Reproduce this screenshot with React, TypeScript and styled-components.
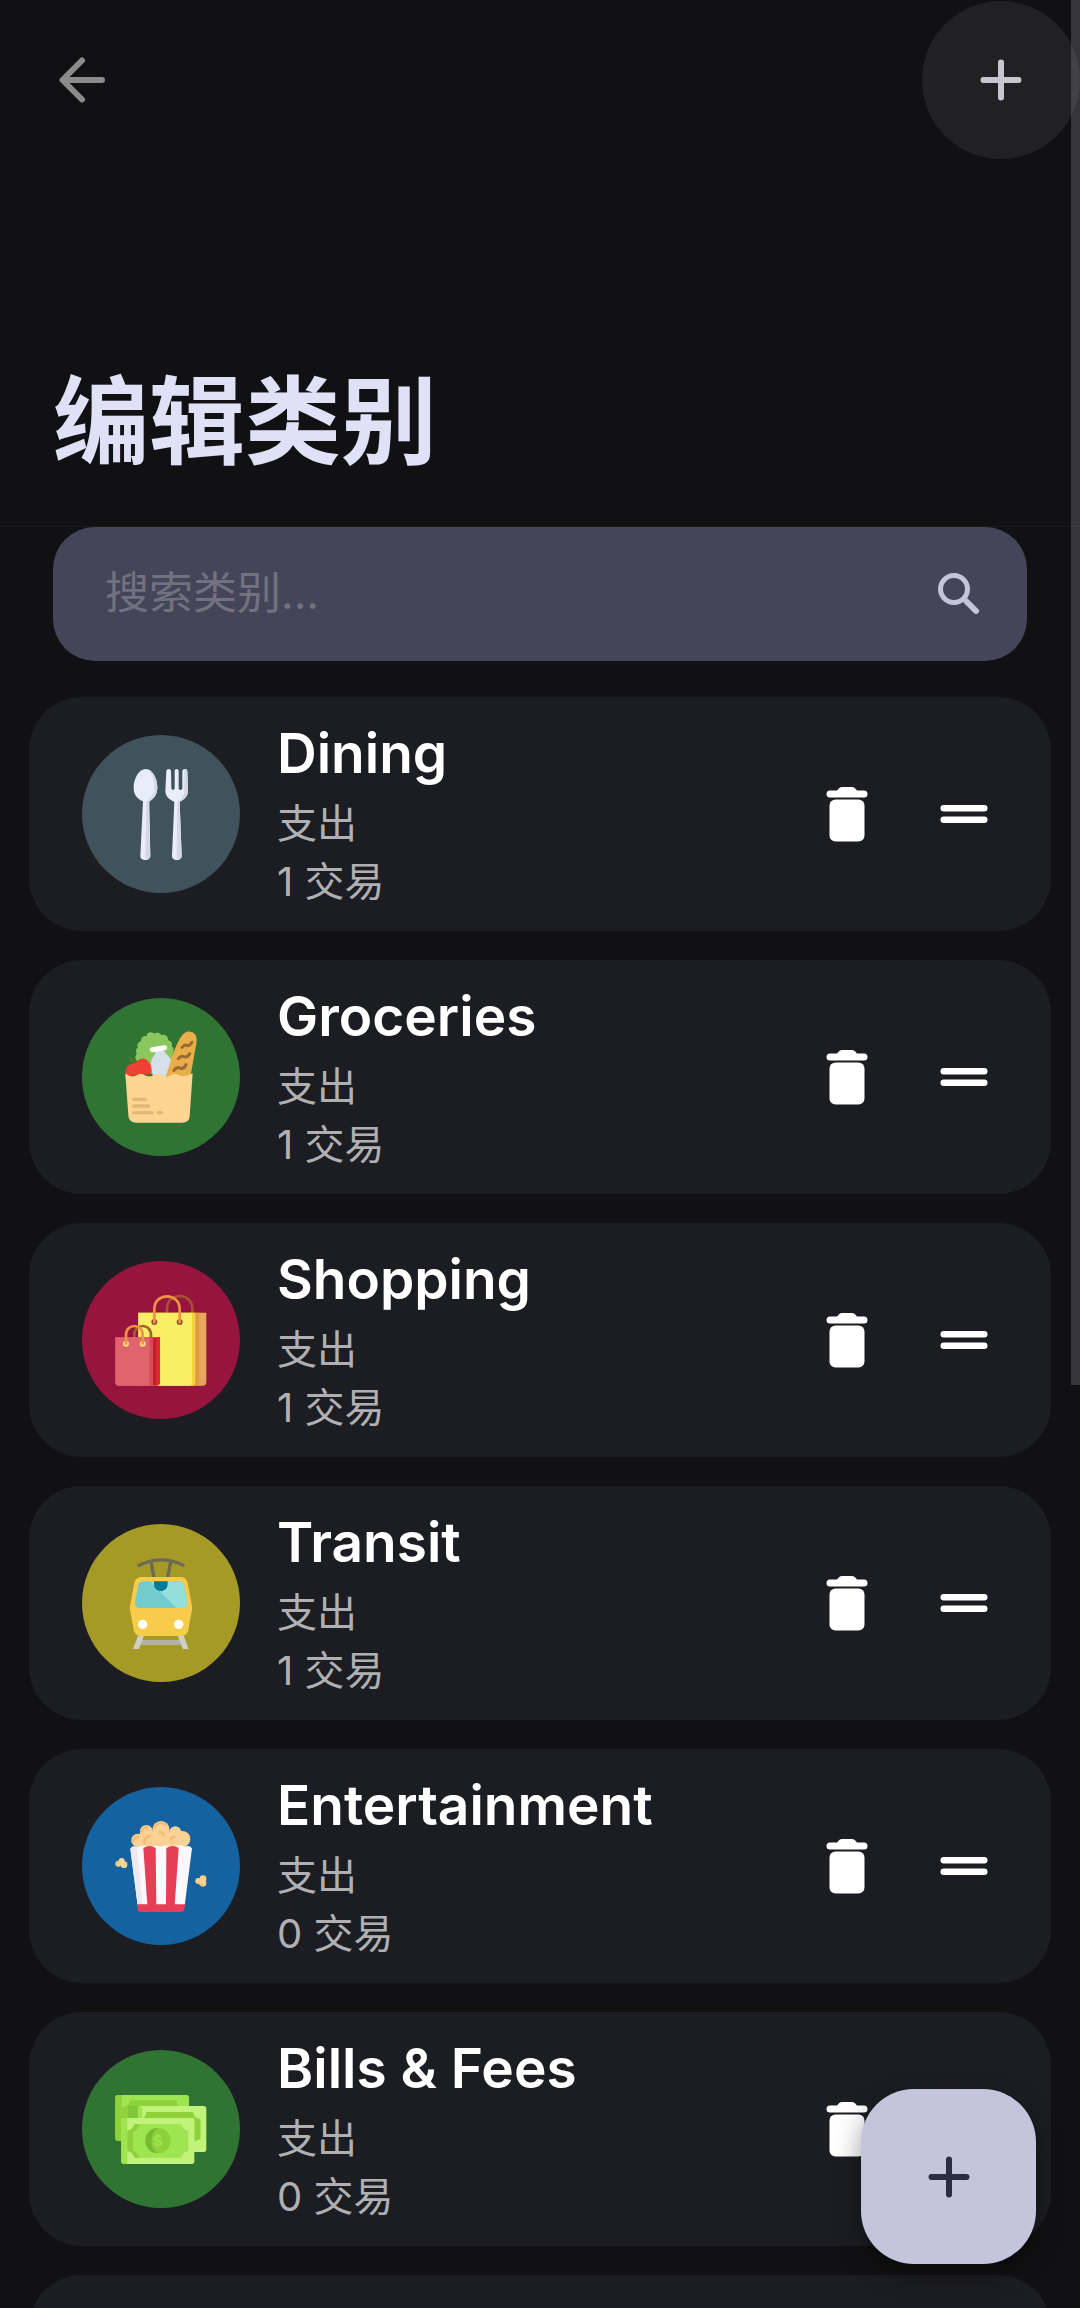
import React from 'react';
import styled, { createGlobalStyle } from 'styled-components';

const GlobalStyle = createGlobalStyle`
  *, *::before, *::after { box-sizing: border-box; }
  body {
    margin: 0;
    background: #111113;
    font-family: Inter, "Noto Sans CJK SC", sans-serif;
    -webkit-font-smoothing: antialiased;
  }
  button { border: 0; margin: 0; padding: 0; background: none; cursor: pointer; }
`;

const Screen = styled.div`
  position: relative;
  display: flex;
  flex-direction: column;
  height: 100vh;
  overflow: hidden;
  background: #111113;
`;

const Header = styled.header`
  flex: none;
  border-bottom: 1px solid #1a1a1c;
`;

const AppBar = styled.div`
  display: flex;
  align-items: center;
  justify-content: space-between;
  padding: 1px 0 0 3px;
`;

const IconButton = styled.button<{ $filled?: boolean }>`
  display: grid;
  place-items: center;
  width: 158px;
  height: 158px;
  border-radius: 50%;
  color: ${p => (p.$filled ? '#c9c5d0' : '#8b8b8c')};
  background: ${p => (p.$filled ? '#212123' : 'transparent')};
`;

const PageTitle = styled.h1`
  margin: 0;
  padding: 200px 53px 55px;
  font-family: "Noto Sans CJK SC", sans-serif;
  font-size: 96px;
  line-height: 112px;
  font-weight: 700;
  color: #e0e1f7;
`;

const SearchBox = styled.label`
  flex: none;
  display: flex;
  align-items: center;
  height: 134px;
  margin: 0 53px;
  padding: 0 32px 0 52px;
  border-radius: 42px;
  background: #444559;
`;

const SearchInput = styled.input`
  flex: 1;
  min-width: 0;
  padding: 0 0 2px;
  border: 0;
  outline: 0;
  background: none;
  font: 400 44px/64px Inter, "Noto Sans CJK SC", sans-serif;
  color: #e0e1f7;
  &::placeholder { color: #717180; opacity: 1; }
`;

const List = styled.ul`
  flex: 1;
  min-height: 0;
  display: flex;
  flex-direction: column;
  gap: 29px;
  margin: 0;
  padding: 36px 29px 0;
  list-style: none;
  overflow: hidden;
`;

const Card = styled.li`
  flex: none;
  display: flex;
  align-items: center;
  height: 234px;
  padding: 0 29px 0 53px;
  border-radius: 53px;
  background: #1c1d22;
`;

const Disc = styled.div<{ $color: string }>`
  flex: none;
  width: 158px;
  height: 158px;
  border-radius: 50%;
  background: ${p => p.$color};
  svg { display: block; width: 100%; height: 100%; }
`;

const Details = styled.div`
  flex: 1;
  min-width: 0;
  padding: 0 0 6px 37px;
`;

const Name = styled.h2`
  margin: 0;
  font: 600 55px/84px Inter, sans-serif;
  color: #ffffff;
  white-space: nowrap;
`;

const Meta = styled.p`
  margin: 0;
  font-size: 40px;
  line-height: 58px;
  color: #b0b0b3;
`;

const RowButton = styled.button`
  display: grid;
  place-items: center;
  width: 117px;
  height: 117px;
  color: #ffffff;
`;

const Fab = styled.button`
  position: absolute;
  right: 44px;
  bottom: 44px;
  display: grid;
  place-items: center;
  width: 175px;
  height: 175px;
  border-radius: 53px;
  color: #2c2d42;
  background: #c4c5dd;
  box-shadow: 0 10px 28px rgba(0, 0, 0, 0.4);
`;

const ScrollThumb = styled.div`
  position: absolute;
  top: 0;
  right: 0;
  width: 9px;
  height: 60%;
  background: rgba(142, 138, 155, 0.3);
`;

const BackIcon = () => (
  <svg width="72" height="72" viewBox="0 0 72 72" fill="none" stroke="currentColor" strokeWidth="6" strokeLinecap="round" strokeLinejoin="round" aria-hidden="true">
    <path d="M56 36H17M36 16.5 16.5 36 36 55.5" />
  </svg>
);

const PlusIcon = () => (
  <svg width="72" height="72" viewBox="0 0 72 72" fill="none" stroke="currentColor" strokeWidth="6" strokeLinecap="round" aria-hidden="true">
    <path d="M36 18.5v35M18.5 36h35" />
  </svg>
);

const SearchIcon = () => (
  <svg width="72" height="72" viewBox="0 0 72 72" fill="none" stroke="#c4c5dd" aria-hidden="true">
    <circle cx="31" cy="31" r="13.5" strokeWidth="5" />
    <path d="M43.5 43.5 53 53" strokeWidth="6" strokeLinecap="round" />
  </svg>
);

const TrashIcon = () => (
  <svg width="72" height="72" viewBox="0 0 72 72" fill="currentColor" aria-hidden="true">
    <path d="M19 12.500h7l2-2.200q1.400-1.300 3.200-1.300h9.600q1.800 0 3.200 1.300l2 2.200h7a3.500 3.500 0 0 1 0 7H19a3.500 3.500 0 0 1 0-7Z" />
    <rect x="18.500" y="21.500" width="35" height="42" rx="6" />
  </svg>
);

const HandleIcon = () => (
  <svg width="72" height="72" viewBox="0 0 72 72" fill="currentColor" aria-hidden="true">
    <rect x="12.500" y="27" width="47" height="6.500" rx="3.250" />
    <rect x="12.500" y="38.500" width="47" height="6.500" rx="3.250" />
  </svg>
);

const DiningArt = () => (
  <svg viewBox="65 48 474 474" aria-hidden="true">
    <path d="M256 150c20 0 35 28 35 56 0 22-12 34-24 41l3 164c0 16-30 16-30 0l8-164c-16-7-28-19-28-41 0-28 16-56 36-56Z" fill="#e9edf9" />
    <path d="M262 151c17 5 29 30 29 55 0 22-12 34-26 43l5 162q0 7-7 10-8 3-8-6l3-168c14-8 24-20 24-42 0-20-8-44-18-54Z" fill="#d3dae6" />
    <path d="M318 157c0-9 14-9 14 0l1 50c0 8 10 8 10 0v-50c0-9 12-9 12 0v50c0 8 11 8 11 0v-50c0-9 15-9 15 0l2 58c0 18-13 27-25 33l6 163c0 16-29 16-29 0l7-163c-14-6-27-15-27-33Z" fill="#e9edf9" />
    <path d="M372 153c4-4 9-2 9 4l2 58c0 18-13 27-25 33l6 163q0 7-7 10-8 3-8-6l2-166c13-8 21-18 21-38Z" fill="#d3dae6" />
  </svg>
);

const GroceriesArt = () => (
  <svg viewBox="65 58 474 474" aria-hidden="true">
    <g fill="#8bc75f">
      <path d="M238 205 264 174l30-4 30 20 14 30-6 66h-96Z" />
      <circle cx="271" cy="173" r="12" /><circle cx="291" cy="174" r="12" />
      <circle cx="255" cy="185" r="13" /><circle cx="309" cy="182" r="14" />
      <circle cx="244" cy="201" r="13" /><circle cx="322" cy="198" r="13" />
      <circle cx="239" cy="218" r="12" /><circle cx="328" cy="214" r="12" />
      <circle cx="238" cy="236" r="13" />
    </g>
    <path d="M316 295c10-40 28-91 44-118 11-18 24-22 36-16 12 5 15 17 12 34l-18 100Z" fill="#e9ad49" />
    <g fill="none" stroke="#9a6a35" strokeWidth="9" strokeLinecap="round">
      <path d="M365 206q8-10 15-6t15-9" />
      <path d="M354 240q8-10 16-6 12 4 18-9" />
      <path d="M341 275q8-11 17-7 13 5 19-10" />
    </g>
    <path d="m286 218 24-4c5 14 20 20 22 31l-16 50h-38c-4-26-9-38-4-52 3-10 12-14 12-25Z" fill="#d5e0eb" />
    <path d="M276 213 313 207" stroke="#fff" strokeWidth="15" strokeLinecap="round" />
    <path d="M195 293c-1-20 2-30 16-36 11-5 15-3 21-11 9-10 23-8 30 0 11 11 13 25 10 41Z" fill="#ee4035" />
    <path d="M199 235c14 0 20 2 24 9l8 3q-11 9-22 3c2-8-3-12-10-15Z" fill="#467c25" />
    <path d="M195 285c12 5 14 9 24 8 12-1 12-7 22-7 12 0 14 8 28 7 11-1 12-7 24-7s12 8 26 8c11-1 12-8 24-8s15 8 28 7c10-1 14-5 26-9l-9 128c-1 14-9 20-22 20H228c-14 0-23-7-24-22Z" fill="#fdd491" />
    <path d="M220 362h35M220 382h45M220 402h55M294 402h10" stroke="#e0b877" strokeWidth="10" strokeLinecap="round" />
  </svg>
);

const ShoppingArt = () => (
  <svg viewBox="65 64 474 474" aria-hidden="true">
    <path d="M320 222v-14c0-52 76-52 76 0v14" fill="none" stroke="#a65138" strokeWidth="8" />
    <path d="M390 219h48v208q0 11-11 11h-40Z" fill="#e7a65d" />
    <path d="M390 219h26v208q0 11-11 11h-20Z" fill="#e09a43" />
    <path d="M234 219h171v208q0 11-11 11H234Z" fill="#f5d43b" />
    <path d="M234 219h161v208q0 11-11 11H234Z" fill="#faee64" />
    <circle cx="282" cy="247" r="9" fill="#8e4f36" /><circle cx="358" cy="247" r="9" fill="#8e4f36" />
    <path d="M282 248v-39c0-52 76-52 76 0v39" fill="none" stroke="#ef9445" strokeWidth="8" strokeLinecap="round" />
    <path d="M222 296v-10c0-36 50-36 50 0v10" fill="none" stroke="#a0632e" strokeWidth="8" />
    <path d="M250 293h49v134q0 11-11 11h-38Z" fill="#c5202d" />
    <path d="M288 293h11v134q0 8-11 11Z" fill="#dd2b2e" />
    <path d="M165 293h113v145H175q-10 0-10-11Z" fill="#d94b58" />
    <path d="M165 293h102v145h-92q-10 0-10-11Z" fill="#df646e" />
    <circle cx="197" cy="312" r="9" fill="#fbe276" /><circle cx="247" cy="312" r="9" fill="#fbe276" />
    <path d="M197 312v-26c0-36 50-36 50 0v26" fill="none" stroke="#ef9445" strokeWidth="8" strokeLinecap="round" />
  </svg>
);

const TransitArt = () => (
  <svg viewBox="65 72 474 474" aria-hidden="true">
    <path d="M236 196Q301 164 368 195M272 186l9 46M331 186l-9 46" fill="none" stroke="#6c6954" strokeWidth="10" strokeLinecap="round" />
    <path d="M238 420h126v15H238Z" fill="#b3b2a7" />
    <path d="m234 404-16 43h18l16-43ZM351 404l16 43h18l-16-43Z" fill="#cfcfc5" />
    <path d="M246 231h112c14 0 21 6 24 18l14 74-12 66c-2 13-11 19-23 19H243c-12 0-20-6-23-19l-12-66 14-74c3-12 11-18 24-18Z" fill="#f8cc4b" />
    <path d="M251 244h103c11 0 16 5 18 14l8 48c2 11-5 18-15 18H239c-10 0-17-7-15-18l9-48c2-9 7-14 18-14Z" fill="#72cbcd" />
    <path d="M269 244h85c11 0 16 5 18 14l8 48c2 11-5 18-15 18h-17Z" fill="#93dfdd" />
    <path d="M281 244h41v8c0 28-41 28-41 0Z" fill="#057a98" />
    <circle cx="247" cy="373" r="14" fill="#fff" /><circle cx="355" cy="373" r="14" fill="#fff" />
  </svg>
);

const PopcornArt = () => (
  <svg viewBox="65 66 474 474" aria-hidden="true">
    <g fill="#fbd293">
      <path d="M240 200h110l30 50H225Z" />
      <circle cx="302" cy="194" r="26" /><circle cx="258" cy="199" r="19" />
      <circle cx="345" cy="202" r="18" /><circle cx="233" cy="226" r="20" />
      <circle cx="366" cy="222" r="24" /><circle cx="270" cy="226" r="24" />
    </g>
    <g fill="none" stroke="#f2bd72" strokeWidth="7" strokeLinecap="round">
      <path d="M281 188c7-14 22-18 36-8" /><path d="M244 201c1-11 10-16 19-14" />
      <path d="M217 231c2-9 8-14 16-15" /><path d="M252 234c-1-12 8-19 18-21" />
      <path d="M298 201c8 0 11 4 11 10" /><path d="M331 224c2-6 7-9 12-8" />
    </g>
    <path d="M210 251q8-12 20-4 18-9 37-2 18-6 35 0 18-7 35 0 19-8 38 0 12-5 20 5l-22 172H232Z" fill="#fbf7fa" />
    <path d="M210 251q8-10 20-4l17 172h-15Z" fill="#ece9f0" />
    <path d="M249 249q19-12 37 0l2 171h-27ZM318 249q19-12 37 0l-12 171h-26Z" fill="#e43f55" />
    <path d="M230 418h145l-3 15q-1 8-9 8H241q-8 0-9-8Z" fill="#e43f55" />
    <g fill="#fbd293">
      <circle cx="184" cy="288" r="9" /><circle cx="174" cy="296" r="9" /><circle cx="191" cy="299" r="10" />
      <circle cx="428" cy="341" r="10" /><circle cx="414" cy="348" r="9" /><circle cx="428" cy="355" r="10" />
    </g>
    <g fill="none" stroke="#f2bd72" strokeWidth="4" strokeLinecap="round">
      <path d="M169 301q-3-7 4-11" /><path d="M415 355q7 8 14 6" />
    </g>
  </svg>
);

const CashArt = () => (
  <svg viewBox="65 72 474 474" aria-hidden="true">
    <rect x="165" y="207" width="221" height="137" rx="8" fill="#9fe551" />
    <path d="M173 207h11v137h-11q-8 0-8-8V215q0-8 8-8Z" fill="#8ed13b" />
    <path d="M209 223h138q2 12 10 17H235v36h-50v-31q20-2 24-22Z" fill="#8ed13b" />
    <path d="M203 240h35v36h-35Z" fill="#82c63b" />
    <rect x="234" y="240" width="204" height="138" rx="8" fill="#c1f37b" />
    <path d="M234 242h12v36h-12Z" fill="#9fe551" />
    <path d="M259 258h139q3 16 22 22v60q-18 2-24 18h-20v-80H249q7-7 10-20Z" fill="#9fe551" />
    <path d="M259 258h139l4 14q-2 6-10 6H249q7-7 10-20ZM402 274l18 6v60q-14 2-18 8Z" fill="#8ed13b" />
    <rect x="183" y="276" width="219" height="138" rx="8" fill="#c1f37b" />
    <path d="M191 276h10v138h-10q-8 0-8-8V284q0-8 8-8Z" fill="#9fe551" />
    <path d="M223 294h139q5 16 22 21v59q-17 5-22 21H223q-5-16-22-21v-59q17-5 22-21Z" fill="#9fe551" />
    <path d="m223 294 15 1q-4 17-20 23v56q16 6 20 21h-15q-5-16-22-21v-59q17-5 22-21Z" fill="#8ed13b" />
    <circle cx="293" cy="344" r="38" fill="#8ed13b" />
    <path d="M293 306c-50 0-50 76 0 76-26-12-26-64 0-76Z" fill="#78b92f" />
    <text x="292" y="360" textAnchor="middle" fontFamily="Inter, sans-serif" fontWeight="600" fontSize="44" fill="#9fe551">$</text>
  </svg>
);

type Category = { name: string; count: number; color: string; Art: React.FC };

const categories: Category[] = [
  { name: 'Dining', count: 1, color: '#40525b', Art: DiningArt },
  { name: 'Groceries', count: 1, color: '#2f7433', Art: GroceriesArt },
  { name: 'Shopping', count: 1, color: '#96143e', Art: ShoppingArt },
  { name: 'Transit', count: 1, color: '#a69a27', Art: TransitArt },
  { name: 'Entertainment', count: 0, color: '#14629f', Art: PopcornArt },
  { name: 'Bills & Fees', count: 0, color: '#2f7433', Art: CashArt },
];

const CategoryCard = ({ name, count, color, Art }: Category) => (
  <Card>
    <Disc $color={color}><Art /></Disc>
    <Details>
      <Name>{name}</Name>
      <Meta>支出</Meta>
      <Meta>{count} 交易</Meta>
    </Details>
    <RowButton type="button" aria-label={`删除 ${name}`}><TrashIcon /></RowButton>
    <RowButton type="button" aria-label={`排序 ${name}`}><HandleIcon /></RowButton>
  </Card>
);

export default function App() {
  return (
    <Screen>
      <GlobalStyle />
      <Header>
        <AppBar>
          <IconButton type="button" aria-label="返回"><BackIcon /></IconButton>
          <IconButton type="button" aria-label="添加" $filled><PlusIcon /></IconButton>
        </AppBar>
        <PageTitle>编辑类别</PageTitle>
      </Header>
      <SearchBox>
        <SearchInput type="text" placeholder="搜索类别..." />
        <SearchIcon />
      </SearchBox>
      <List>
        {categories.map(c => <CategoryCard key={c.name} {...c} />)}
        <Card />
      </List>
      <Fab type="button" aria-label="添加类别"><PlusIcon /></Fab>
      <ScrollThumb />
    </Screen>
  );
}
